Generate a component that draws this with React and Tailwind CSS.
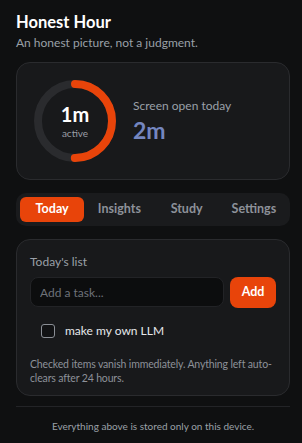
import React, { useState } from 'react';

const ORANGE = 'bg-[#e8440a]';

const Ring = () => {
    const r = 37;
    const c = 2 * Math.PI * r;
    return (
        <div className="relative w-[82px] h-[82px] shrink-0">
            <svg width="82" height="82" viewBox="0 0 82 82" className="-rotate-90">
                <circle cx="41" cy="41" r={r} fill="none" stroke="#2a2b2e" strokeWidth="8" />
                <circle
                    cx="41"
                    cy="41"
                    r={r}
                    fill="none"
                    stroke="#e8440a"
                    strokeWidth="8"
                    strokeLinecap="round"
                    strokeDasharray={`${c / 2} ${c}`}
                />
            </svg>
            <div className="absolute inset-0 flex flex-col items-center justify-center">
                <span className="text-[20px] font-bold text-white leading-none">1m</span>
                <span className="text-[10px] text-[#9a9ea6] mt-[4px] leading-none">active</span>
            </div>
        </div>
    );
};

const App = () => {
    const [tab, setTab] = useState('Today');
    const [done, setDone] = useState(false);
    const tabs = ['Today', 'Insights', 'Study', 'Settings'];

    return (
        <div
            className="min-h-[443px] bg-[#0f1011] pl-4 pr-[12px] pt-[12px] pb-3"
            style={{ fontFamily: 'Lato, "Open Sans", sans-serif' }}
        >
            {/* Header */}
            <h1 className="text-[16.5px] font-bold text-white leading-[20px]">Honest Hour</h1>
            <p className="text-[12px] text-[#9aa0a8] mt-[3px] leading-[16px]">An honest picture, not a judgment.</p>

            {/* Summary card */}
            <div className="mt-[11px] rounded-[14px] border border-[#2a2b2e] bg-[#18191b] p-[17px] flex items-center gap-[17px]">
                <Ring />
                <div>
                    <div className="text-[12px] text-[#9aa0a8] leading-[16px]">Screen open today</div>
                    <div className="text-[23px] font-bold text-[#7486c0] leading-[28px] mt-[2px]">2m</div>
                </div>
            </div>

            {/* Tabs */}
            <div className="mt-[13px] rounded-[10px] bg-[#1a1b1d] p-[4px] flex gap-[3px]">
                {tabs.map((t) => (
                    <button
                        key={t}
                        onClick={() => setTab(t)}
                        className={`flex-1 h-[25px] rounded-[6px] text-[12.5px] font-bold ${tab === t ? `${ORANGE} text-white` : 'text-[#8d9199]'}`}
                    >
                        {t}
                    </button>
                ))}
            </div>

            {/* List card */}
            <div className="mt-[13px] rounded-[14px] border border-[#2a2b2e] bg-[#18191b] pl-[13px] pr-[12px] pt-[14px] pb-[10px]">
                <div className="text-[12px] text-[#9aa0a8] leading-[16px]">Today's list</div>
                <div className="mt-[7px] flex gap-[6px] pr-px">
                    <input
                        placeholder="Add a task..."
                        className="flex-1 min-w-0 h-[30px] rounded-[8px] border border-[#222326] bg-[#0c0d0e] px-[9px] text-[12px] text-white placeholder:text-[#6e7279] outline-none"
                    />
                    <button className={`w-[46px] h-[31px] rounded-[8px] ${ORANGE} text-white text-[12.5px] font-bold`}>Add</button>
                </div>
                <label className="mt-[14px] ml-[11px] flex items-center gap-[10px] cursor-pointer">
                    <input
                        type="checkbox"
                        checked={done}
                        onChange={() => setDone(!done)}
                        className="appearance-none w-[14px] h-[14px] rounded-[3px] border border-[#8a8e95] bg-[#111214]"
                    />
                    <span className="text-[12px] text-[#e6e8eb]">make my own LLM</span>
                </label>
                <p className="mt-[17px] text-[10.5px] leading-[14px] tracking-[-0.15px] text-[#8d9199]">
                    Checked items vanish immediately. Anything left auto-clears after 24 hours.
                </p>
            </div>

            {/* Footer */}
            <div className="mt-[10px] border-t border-[#232427] pt-[12px] text-center text-[10px] text-[#9aa0a8]">
                Everything above is stored only on this device.
            </div>
        </div>
    );
};

export default App;
